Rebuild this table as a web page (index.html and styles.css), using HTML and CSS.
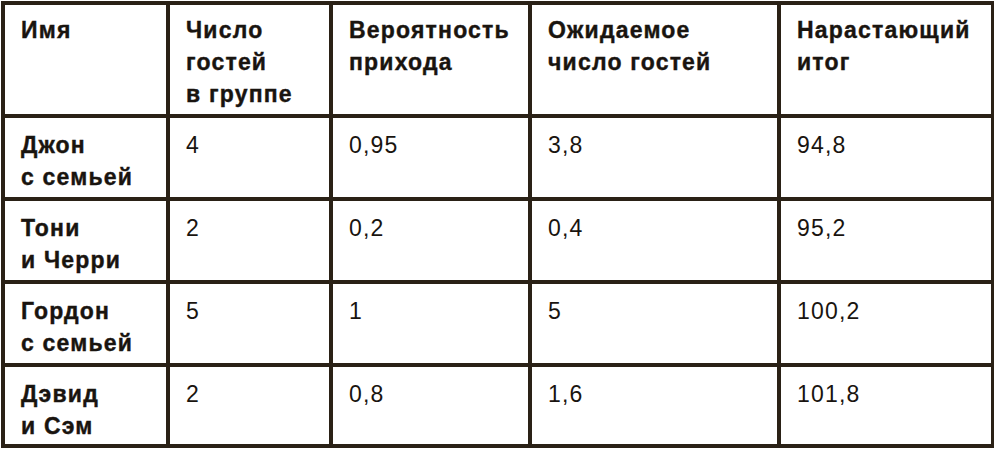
FILE: index.html
```html
<!DOCTYPE html>
<html lang="ru">
<head>
<meta charset="utf-8">
<link rel="stylesheet" href="styles.css">
</head>
<body>
<table class="guests">
  <colgroup>
    <col class="c1"><col class="c2"><col class="c3"><col class="c4"><col class="c5">
  </colgroup>
  <thead>
    <tr>
      <th>Имя</th>
      <th>Число<br>гостей<br>в группе</th>
      <th>Вероятность<br>прихода</th>
      <th>Ожидаемое<br>число гостей</th>
      <th>Нарастающий<br>итог</th>
    </tr>
  </thead>
  <tbody>
    <tr><td class="name">Джон<br>с семьей</td><td>4</td><td>0,95</td><td>3,8</td><td>94,8</td></tr>
    <tr><td class="name">Тони<br>и Черри</td><td>2</td><td>0,2</td><td>0,4</td><td>95,2</td></tr>
    <tr><td class="name">Гордон<br>с семьей</td><td>5</td><td>1</td><td>5</td><td>100,2</td></tr>
    <tr class="last"><td class="name">Дэвид<br>и Сэм</td><td>2</td><td>0,8</td><td>1,6</td><td>101,8</td></tr>
  </tbody>
</table>
</body>
</html>
```

FILE: styles.css
```css
html, body {
  margin: 0;
  padding: 0;
  background: #ffffff;
}
body {
  padding: 1px;
}
.guests {
  border-collapse: collapse;
  table-layout: fixed;
  width: 990px;
  font-family: "Liberation Sans", Arial, sans-serif;
  font-size: 23px;
  line-height: 32px;
  letter-spacing: 1.2px;
  color: #19140f;
}
.c1 { width: 165px; }
.c2 { width: 163px; }
.c3 { width: 199px; }
.c4 { width: 249px; }
.c5 { width: 214px; }
.guests th,
.guests td {
  border: 4px solid #2a2116;
  vertical-align: top;
  text-align: left;
  padding: 9px 10px 0 16px;
  white-space: nowrap;
}
.guests th {
  font-weight: bold;
  height: 100px;
  -webkit-text-stroke: 0.4px #19140f;
}
.guests td {
  font-weight: normal;
  height: 68px;
  padding-top: 11px;
}
.guests td.name {
  font-weight: bold;
  -webkit-text-stroke: 0.4px #19140f;
}
.guests tr.last td {
  height: 66px;
}
```
